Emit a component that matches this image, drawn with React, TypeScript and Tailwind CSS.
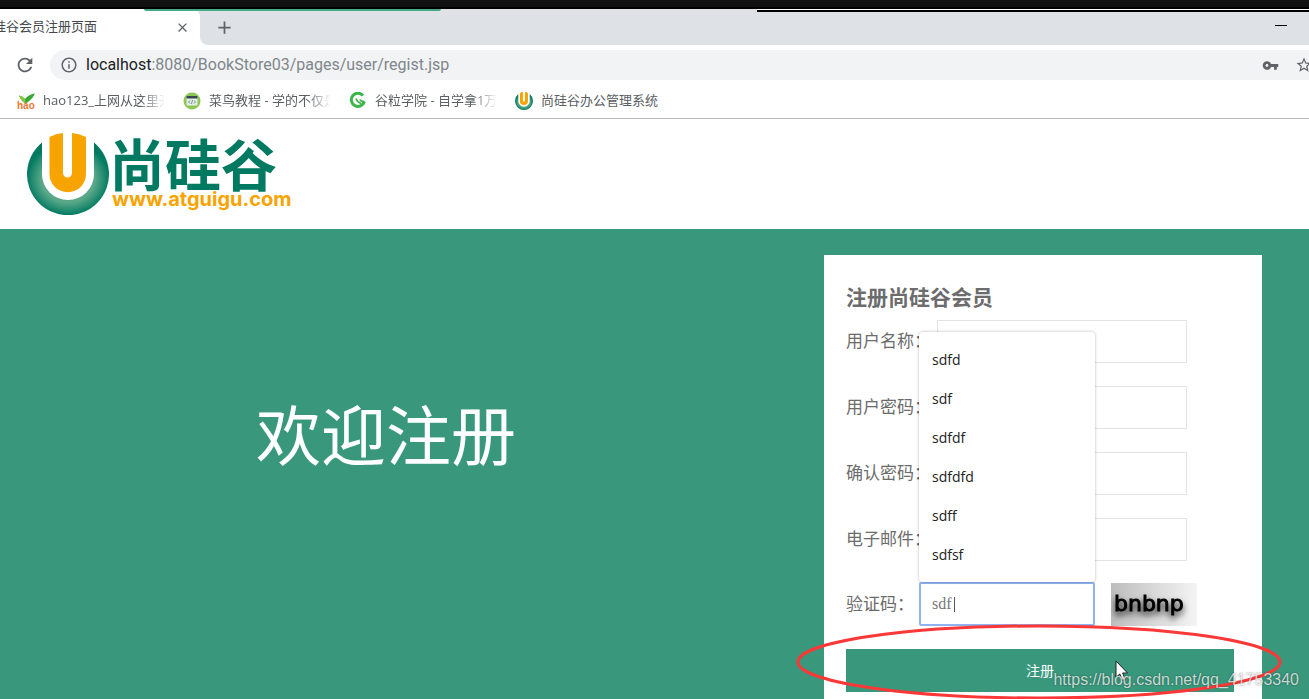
import type { ReactNode } from "react";
import { MdAdd, MdClose, MdOutlineInfo, MdRefresh, MdStarBorder, MdVpnKey } from "react-icons/md";

type Field = { id: string; label: string; type: string };

const fields: Field[] = [
  { id: "username", label: "用户名称：", type: "text" },
  { id: "password", label: "用户密码：", type: "password" },
  { id: "repwd", label: "确认密码：", type: "password" },
  { id: "email", label: "电子邮件：", type: "text" },
];

const suggestions = ["sdfd", "sdf", "sdfdf", "sdfdfd", "sdff", "sdfsf"];

function AtguiguMark({ className }: { className: string }) {
  return (
    <svg viewBox="0 0 82 82" className={className} aria-hidden="true">
      <defs>
        <radialGradient id="bowl" cx="0.5" cy="0.5" r="0.5">
          <stop offset="0.65" stopColor="#5aa888" />
          <stop offset="1" stopColor="#027a62" />
        </radialGradient>
      </defs>
      <path d="M15 9.500A41 41 0 1 0 67 9.500V41A26 26 0 0 1 15 41Z" fill="url(#bowl)" />
      <path d="M22.500 4Q29 .5 36 0V40a4.500 4.500 0 0 0 9 0V0Q52 .5 59 4V41a18 18 0 0 1-36.500 0Z" fill="#f7a400" />
    </svg>
  );
}

function HaoIcon() {
  return (
    <svg viewBox="0 0 18 18" className="h-[18px] w-[18px] shrink-0 overflow-visible">
      <path d="M2 3.500Q6 4 8 7Q12 2 18 1.500Q15 8 8.500 11.500Q4 9 2 3.500Z" fill="#39a935" />
      <path d="M2 3.500Q6 4 8 7L8.500 11.500Q4 9 2 3.500Z" fill="#8cc63f" />
      <text x="0" y="16.500" fontSize="10" fontWeight="700" fill="#ee7733" fontFamily="Liberation Sans, sans-serif">hao</text>
    </svg>
  );
}

function RunoobIcon() {
  return (
    <svg viewBox="0 0 18 18" className="h-[18px] w-[18px] shrink-0">
      <circle cx="9" cy="9" r="8.500" fill="#8cc653" />
      <rect x="3.500" y="4" width="11" height="9.500" rx="1" fill="#e5eee3" />
      <path d="M3.500 4h11v2.500h-11z" fill="#37474f" />
      <path d="M7 8.500 5.500 10 7 11.500M11 8.500 12.500 10 11 11.500M9.600 8.200 8.400 11.800" fill="none" stroke="#607d8b" strokeWidth="0.9" />
    </svg>
  );
}

function GuliIcon() {
  return (
    <svg viewBox="0 0 18 18" className="h-[18px] w-[18px] shrink-0" fill="none" stroke="#3cb54a">
      <path d="M14 3.600A6.600 6.600 0 1 0 15.300 9.500" strokeWidth="3" />
      <path d="M7 6.500Q8 10 12 11.500M11 7.500Q11.500 9.500 15.500 9.500" strokeWidth="1.600" />
    </svg>
  );
}

const bookmarks: { text: string; icon: ReactNode }[] = [
  { text: "hao123_上网从这里开始", icon: <HaoIcon /> },
  { text: "菜鸟教程 - 学的不仅是技术", icon: <RunoobIcon /> },
  { text: "谷粒学院 - 自学拿1万+月薪", icon: <GuliIcon /> },
  { text: "尚硅谷办公管理系统", icon: <AtguiguMark className="h-[18px] w-[18px] shrink-0" /> },
];

function BrowserChrome() {
  return (
    <header className="shrink-0 text-[#5f6368]">
      <div className="h-[9px] border-b-2 border-black bg-[#111]" />
      <div className="relative flex h-9 items-stretch bg-[#dee1e6]">
        <div className="flex w-[200px] items-center justify-between rounded-tr-lg bg-white pr-[10px]">
          <div className="flex w-[97px] justify-end overflow-hidden text-[13px] whitespace-nowrap text-[#45494d]">
            <span>尚硅谷会员注册页面</span>
          </div>
          <button aria-label="关闭标签页"><MdClose size={15} /></button>
        </div>
        {/* curved foot of the active tab */}
        <div className="bg-white">
          <div className="flex h-full w-12 items-center justify-center rounded-bl-lg bg-[#dee1e6]">
            <button aria-label="新标签页"><MdAdd size={21} /></button>
          </div>
        </div>
        <button aria-label="最小化" className="mr-[22px] ml-auto flex items-center pb-1">
          <span className="h-px w-3 bg-black" />
        </button>
        <div className="absolute top-0 left-36 h-[2px] w-[297px] rounded-b bg-[#45a887]" />
        <div className="absolute top-0 right-0 left-[757px] h-[3px] border-t border-white bg-black" />
      </div>
      <div className="flex h-10 items-center bg-white">
        <button aria-label="重新加载" className="flex w-[50px] justify-center"><MdRefresh size={22} /></button>
        <div className="flex h-[30px] flex-1 items-center overflow-hidden rounded-l-full bg-[#f1f3f4] pl-[10px]">
          <MdOutlineInfo size={18} className="shrink-0" />
          <div className="ml-2 flex-1 pb-px font-['Roboto',sans-serif] text-base text-[#80868b]">
            <span className="text-[#202124]">localhost</span>:8080/BookStore03/pages/user/regist.jsp
          </div>
          <MdVpnKey size={17} className="mr-4 shrink-0" />
          <MdStarBorder size={18} className="-mr-1 shrink-0" />
        </div>
      </div>
      <nav className="flex h-[34px] items-center gap-[18px] border-b border-[#b8b8b8] bg-white pb-px pl-[17px]">
        {bookmarks.map((b, i) => (
          <a key={b.text} href="#" className="flex items-center gap-2 text-[13px] text-[#5a5e62]">
            {b.icon}
            <span
              className={`w-[122px] overflow-hidden whitespace-nowrap ${i < 3 ? "[mask-image:linear-gradient(to_right,black_80%,transparent)]" : ""}`}
            >
              {b.text}
            </span>
          </a>
        ))}
      </nav>
    </header>
  );
}

function Captcha() {
  return (
    <svg viewBox="0 0 86 43" className="ml-4 h-[43px] w-[86px]" role="img" aria-label="验证码图片">
      <defs>
        <linearGradient id="captchaBg">
          <stop offset="0" stopColor="#bdbdbd" />
          <stop offset="1" stopColor="#f4f4f4" />
        </linearGradient>
        <filter id="captchaShadow" x="-20%" y="-40%" width="140%" height="200%">
          <feDropShadow dx="0" dy="4" stdDeviation="3" floodColor="#000" floodOpacity="0.8" />
        </filter>
      </defs>
      <rect width="86" height="43" fill="url(#captchaBg)" />
      <text x="3" y="28" fontFamily="DejaVu Sans, sans-serif" fontSize="22" stroke="#000" strokeWidth="1" filter="url(#captchaShadow)">
        bnbnp
      </text>
    </svg>
  );
}

function RegisterForm() {
  return (
    <form
      className="mt-[26px] mr-[47px] w-[438px] shrink-0 bg-white pt-[30px] pr-7 pb-2 pl-[22px] text-[#6c6c6c]"
      onSubmit={e => e.preventDefault()}
    >
      <h1 className="mb-[11px] text-[21px] leading-6 font-bold">注册尚硅谷会员</h1>
      <div className="flex flex-col gap-[23px] text-[17px]">
        {fields.map(f => (
          <div key={f.id} className="flex items-center gap-[6px]">
            <label htmlFor={f.id} className="pb-[2px]">{f.label}</label>
            <input id={f.id} type={f.type} className="h-[43px] w-[250px] border border-[#e3e3e3] bg-white px-3 outline-none" />
          </div>
        ))}
        <div className="-mt-[2px] flex items-center">
          <label htmlFor="code" className="mr-[5px]">验证码：</label>
          <div className="relative">
            <input
              id="code"
              type="text"
              defaultValue="sdf"
              autoComplete="off"
              className="block h-[44px] w-[176px] rounded-xs border-2 border-[#8fb2f0] bg-white px-[11px] font-['Liberation_Serif',serif] text-base text-[#777] outline-none"
            />
            <span className="absolute top-[15px] left-[35px] h-[15px] w-px bg-[#555]" />
            <ul className="absolute bottom-full left-0 w-[176px] rounded bg-white py-2 text-sm text-[#222] shadow-[0_0_3px_rgba(0,0,0,0.3)]">
              {suggestions.map(s => (
                <li key={s} className="flex h-[39px] items-center px-[13px]">{s}</li>
              ))}
            </ul>
          </div>
          <Captcha />
        </div>
        <div className="relative">
          <button type="submit" className="block h-[43px] w-full bg-[#39987c] text-sm text-white">注册</button>
          {/* annotation over the submit button */}
          <svg viewBox="0 0 486 76" className="pointer-events-none absolute -top-[25px] -left-[50px] h-[76px] w-[486px]" fill="none">
            <ellipse cx="243" cy="38" rx="241" ry="36" stroke="#fb3838" strokeWidth="3" />
          </svg>
          <svg viewBox="0 0 14 22" className="pointer-events-none absolute top-[11px] left-[269px] h-[22px] w-[14px]">
            <path d="M1 1V17.500L4.800 14L7.500 20.500L10.300 19.300L7.600 13H12.500Z" fill="#fff" stroke="#222" strokeWidth="1" />
          </svg>
        </div>
      </div>
    </form>
  );
}

export default function App() {
  return (
    <div className="relative flex h-screen flex-col overflow-hidden bg-white font-['Open_Sans','Noto_Sans_CJK_SC',sans-serif]">
      <BrowserChrome />
      <div className="flex h-[110px] shrink-0 items-center pl-[27px]">
        <AtguiguMark className="h-[82px] w-[82px]" />
        <div className="pb-1 font-bold">
          <div className="font-['Noto_Sans_CJK_SC',sans-serif] text-[56px] leading-[54px] text-[#027a62]">尚硅谷</div>
          <div className="pl-[3px] font-['Inter',sans-serif] text-xl leading-5 text-[#f7a400]">www.atguigu.com</div>
        </div>
      </div>
      <main className="flex flex-1 items-start justify-between bg-[#39987c]">
        <h2 className="mt-[174px] ml-64 text-[65px] leading-[65px] whitespace-nowrap text-white">欢迎注册</h2>
        <RegisterForm />
      </main>
      <div className="absolute right-[10px] bottom-[9px] font-['Liberation_Sans',sans-serif] text-base leading-5 text-white/75 [text-shadow:0_0_2px_rgba(0,0,0,0.5)]">
        https://blog.csdn.net/qq_41753340
      </div>
    </div>
  );
}
